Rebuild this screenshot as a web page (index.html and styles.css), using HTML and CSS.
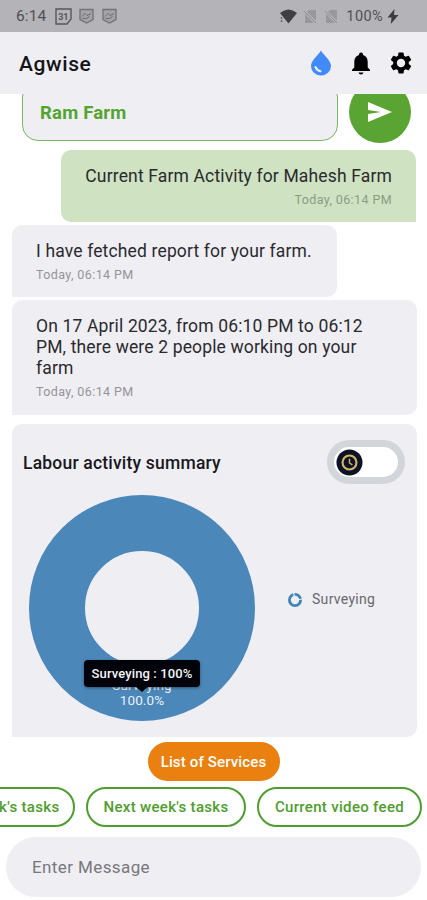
FILE: index.html
```html
<!DOCTYPE html>
<html lang="en">
<head>
<meta charset="utf-8">
<title>Agwise</title>
<link rel="stylesheet" href="styles.css">
</head>
<body>
<div class="status">
  <span class="clock">6:14</span>
  <svg class="st-cal" width="17" height="17" viewBox="0 0 17 17"><path d="M1 1h15v10l-4 5H1z" fill="none" stroke="#57575b" stroke-width="1.4"/><text x="8.3" y="12" text-anchor="middle">31</text></svg>
  <svg class="st-shield" width="15" height="16" viewBox="0 0 15 16"><path d="M1 1.500h13v10L7.500 15 1 11.500z" fill="#a4a4a8" stroke="#727276" stroke-width="1.300"/><path d="M3 8.500l3-3 2 2 4-2M3.500 10.500h4l3-2" fill="none" stroke="#6c6c70"/></svg>
  <svg class="st-shield second" width="15" height="16" viewBox="0 0 15 16"><path d="M1 1.500h13v10L7.500 15 1 11.500z" fill="#a4a4a8" stroke="#727276" stroke-width="1.300"/><path d="M3 8.500l3-3 2 2 4-2M3.500 10.500h4l3-2" fill="none" stroke="#6c6c70"/></svg>
  <span class="grow"></span>
  <svg class="st-wifi" width="17" height="15" viewBox="0 0 17 15"><path d="M0 4Q8.500-3 17 4L8.500 14.500z" fill="#3f3f43"/><path d="M1.500 8v6" stroke="#6b6b6f" stroke-width="1.500" stroke-dasharray="2 1"/></svg>
  <svg class="st-sim" width="14" height="15" viewBox="0 0 14 15"><path d="M6 1h7v10.500L4 3zM2 5l9 9H2z" fill="#98989c"/><path d="M1 2l12 12" stroke="#8c8c90"/></svg>
  <svg class="st-sim" width="14" height="15" viewBox="0 0 14 15"><path d="M6 1h7v10.500L4 3zM2 5l9 9H2z" fill="#98989c"/><path d="M1 2l12 12" stroke="#8c8c90"/></svg>
  <span class="battery">100%</span>
  <svg class="st-bolt" width="12" height="15" viewBox="0 0 12 15"><path d="M7.500 0L0.500 8.500h4L3.800 15 11.500 6H7z" fill="#3c3c40"/></svg>
</div>
<header class="header">
  <h1 class="title">Agwise</h1>
  <svg class="drop" width="22" height="26" viewBox="0 0 22 26"><path d="M11 .5C8 5.500 1 10.500 1 16a10 9.500 0 0 0 20 0C21 10.500 14 5.500 11 .5z" fill="#428af8"/><path d="M5.500 17q1.500 3.700 5 4.200" fill="none" stroke="#e6effd" stroke-width="2" stroke-linecap="round"/></svg>
  <svg class="bell" width="20" height="23" viewBox="0 0 20 23"><path d="M10 0.500a2 2 0 0 1 2 2v.6c3.200 1 4.700 3.500 4.700 6.900v5.500l2.300 2.300v1.200H1v-1.200l2.300-2.300V10C3.300 6.600 4.800 4.100 8 3.100v-.6a2 2 0 0 1 2-2z"/><path d="M7.500 20.500h5Q12 22.500 10 22.500t-2.500-2z"/></svg>
  <svg class="gear" width="26" height="26" viewBox="0 0 24 24"><path fill-rule="evenodd" d="M19.140 12.940c.04-.3.060-.61.060-.94s-.02-.64-.07-.94l2.030-1.580a.49.49 0 0 0 .12-.61l-1.920-3.320a.49.49 0 0 0-.59-.22l-2.390.96a7 7 0 0 0-1.620-.94l-.36-2.540a.48.48 0 0 0-.48-.41h-3.840c-.24 0-.43.170-.47.410l-.36 2.540c-.59.240-1.130.570-1.620.940l-2.390-.96a.48.48 0 0 0-.59.220L2.740 8.870a.48.48 0 0 0 .12.610l2.030 1.580c-.05.300-.09.630-.09.940s.02.640.070.940l-2.030 1.580a.49.49 0 0 0-.12.610l1.920 3.320c.12.220.37.290.59.220l2.390-.96c.5.380 1.030.700 1.620.940l.36 2.540c.05.240.24.410.48.410h3.840c.24 0 .44-.17.470-.41l.36-2.540c.59-.24 1.130-.56 1.620-.94l2.390.960c.22.080.47 0 .59-.22l1.920-3.320a.48.48 0 0 0-.12-.61zM12 15.900a3.900 3.900 0 1 1 0-7.800 3.900 3.900 0 0 1 0 7.800z"/></svg>
</header>
<main class="chat">
  <div class="picker">
    <div class="farm">Ram Farm</div>
    <button class="send" aria-label="Send"><svg width="24" height="20" viewBox="0 0 24 20"><path d="M0 0l24 10L0 20v-8l13-2L0 8z" fill="#fff"/></svg></button>
  </div>
  <section class="bubble mine"><p class="msg">Current Farm Activity for Mahesh Farm</p><time>Today, 06:14 PM</time></section>
  <section class="bubble short"><p class="msg">I have fetched report for your farm.</p><time>Today, 06:14 PM</time></section>
  <section class="bubble long"><p class="msg">On 17 April 2023, from 06:10 PM to 06:12<br>PM, there were 2 people working on your<br>farm</p><time>Today, 06:14 PM</time></section>
  <section class="card">
    <div class="card-head"><h2>Labour activity summary</h2>
      <div class="toggle"><svg class="knob" width="27" height="27" viewBox="0 0 28 28"><circle cx="14" cy="14" r="13.500" fill="#0d1226"/><circle cx="14" cy="14" r="7.200" fill="none" stroke="#d3b662" stroke-width="2.200"/><path d="M14 10v4.500l3 2" fill="none" stroke="#d3b662" stroke-width="1.500"/></svg></div>
    </div>
    <div class="chart-row">
      <div class="donut">
        <div class="slice-label">Surveying<br>100.0%</div>
        <div class="tip">Surveying : 100%</div>
      </div>
      <div class="legend">
        <svg width="16" height="16" viewBox="0 0 16 16"><circle cx="8" cy="8" r="5.600" fill="none" stroke="#3f86b6" stroke-width="2.800"/><path d="M8 8L6.500 0M8 8l8-1" stroke="#efeef3" stroke-width="1.200"/></svg>
        <span>Surveying</span>
      </div>
    </div>
  </section>
</main>
<div class="services"><button>List of Services</button></div>
<nav class="chips"><button class="chip c1">This week's tasks</button><button class="chip c2">Next week's tasks</button><button class="chip c3">Current video feed</button></nav>
<div class="entry">Enter Message</div>
</body>
</html>
```
FILE: styles.css
```css
* { box-sizing: border-box; }
body { margin: 0; width: 427px; height: 900px; overflow: hidden; background: #fff; font-family: Roboto, sans-serif; color: #2a2a2e; display: flex; flex-direction: column; }
h1, h2, p { margin: 0; font-weight: 500; }
button { font: inherit; border: 0; padding: 0; white-space: nowrap; }
svg { flex: none; display: block; }
.status { height: 32px; flex: none; background: #b4b3b8; display: flex; align-items: center; padding: 0 28px 0 16px; color: #505054; }
.clock { font-size: 15.500px; letter-spacing: .1px; width: 39px; }
.st-cal text { font: 700 9px Roboto, sans-serif; fill: #57575b; }
.st-shield { margin-left: 7px; }
.st-shield.second { margin-left: 8px; }
.grow { flex: 1; }
.st-wifi { margin-right: 6px; }
.st-sim { margin-right: 7px; }
.battery { font-size: 14.500px; letter-spacing: .4px; margin: 0 4px 0 1px; }
.header { height: 62px; flex: none; background: #efeef3; display: flex; align-items: center; padding: 0 13px 0 19px; }
.title { font-size: 21px; letter-spacing: .6px; margin-right: auto; padding-top: 2px; color: #151518; }
.bell { margin: 0 17px 0 19px; }
.chat { height: 643px; flex: none; overflow: hidden; padding: 0 10px 0 12px; display: flex; flex-direction: column; }
.picker { height: 49px; margin-top: -13px; display: flex; flex: none; align-items: flex-start; padding: 0 6px 0 10px; justify-content: space-between; }
.farm { width: 316px; height: 60px; border: 1px solid #78b660; border-radius: 16px; background: #efeef3; color: #54a52f; font-size: 18.500px; font-weight: 700; letter-spacing: .2px; line-height: 22px; padding: 20px 17px 0; }
.send { width: 62px; height: 62px; border-radius: 50%; background: #59a433; display: flex; align-items: center; justify-content: center; }
.bubble { background: #efeef3; border-radius: 10px 10px 10px 0; padding: 16px 24px 0; flex: none; }
.msg { font-size: 17.500px; line-height: 21px; font-weight: 400; letter-spacing: .15px; white-space: nowrap; }
time { display: block; font-size: 12.500px; line-height: 15px; margin-top: 5px; color: #94949a; letter-spacing: .4px; }
.mine { align-self: flex-end; width: 355px; height: 72px; margin-top: 20px; margin-right: 1px; background: #cfe3c2; border-radius: 10px 10px 0 10px; text-align: right; }
.mine time { color: #8a9b85; }
.short { width: 325px; height: 72px; margin-top: 3px; }
.long { width: 405px; height: 115px; margin-top: 3px; }
.card { width: 405px; height: 313px; margin-top: 9px; flex: none; background: #efeef3; border-radius: 10px 10px 10px 0; padding: 16px 12px 0 11px; }
.card-head { height: 44px; display: flex; align-items: center; justify-content: space-between; }
h2 { font-size: 17.500px; letter-spacing: .2px; padding-top: 2px; color: #18181c; }
.toggle { width: 78px; height: 44px; border: 7px solid #d2d6db; border-radius: 22px; background: #fff; display: flex; align-items: center; padding-left: 2px; }
.chart-row { display: flex; margin-top: 11px; padding-left: 6px; align-items: flex-start; }
.donut { position: relative; width: 226px; height: 226px; border-radius: 50%; border: 56px solid #4b87b9; }
.slice-label { position: absolute; left: -56px; width: 226px; top: 127px; text-align: center; color: #e9f1f9; font-size: 13.500px; line-height: 15px; letter-spacing: .1px; }
.tip { position: absolute; left: -1px; top: 109px; width: 116px; height: 27px; border-radius: 4px; background: #01030b; color: #f5f5f5; font-size: 13px; font-weight: 500; letter-spacing: .12px; line-height: 27px; text-align: center; white-space: nowrap; box-shadow: 0 1px 3px #0006; }
.tip::after { content: ""; position: absolute; left: 51px; top: 26px; border: 7px solid transparent; border-top: 6px solid #01030b; border-bottom: 0; }
.legend { display: flex; align-items: center; gap: 9px; margin: 96px 0 0 32px; font-size: 14px; line-height: 17px; letter-spacing: .3px; color: #68686d; }
.services { flex: none; height: 50px; padding-top: 5px; display: flex; justify-content: center; }
.services button { width: 132px; height: 39px; border-radius: 20px; background: #e9800f; color: #fff; font-size: 15px; font-weight: 500; letter-spacing: .15px; }
.chips { display: flex; flex: none; gap: 11px; height: 40px; justify-content: flex-end; padding-right: 5px; }
.chip { flex: none; height: 40px; border: 2px solid #4d9e2c; border-radius: 20px; color: #4d9e2c; background: #fff; font-size: 15px; font-weight: 500; letter-spacing: .32px; }
.c1 { width: 154px; }
.c2 { width: 160px; }
.c3 { width: 165px; }
.entry { flex: none; height: 60px; margin: 10px 6px 0; border-radius: 30px; background: #efeef3; color: #77777c; font-size: 17px; line-height: 60px; padding-left: 26px; letter-spacing: .4px; }
```
